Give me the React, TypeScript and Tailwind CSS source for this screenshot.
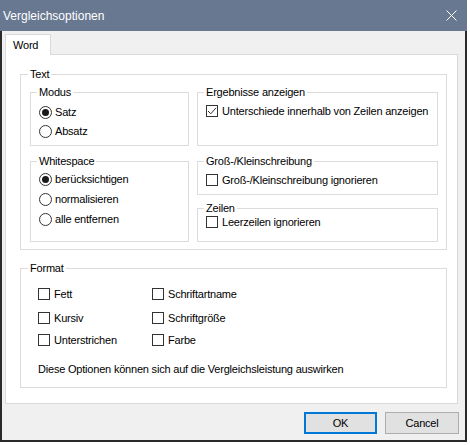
import type { ReactNode } from 'react'

function Group({ label, className, children }: { label: string; className: string; children?: ReactNode }) {
  return (
    <fieldset className={`border border-[#dcdcdc] min-w-0 ${className}`}>
      <legend className="ml-[-2px] px-[2px] leading-[12px]">{label}</legend>
      {children}
    </fieldset>
  )
}

function Radio({ checked, label, h }: { checked?: boolean; label: string; h: string }) {
  return (
    <div className={`flex items-center gap-[3px] ${h}`}>
      <svg width="13" height="13" viewBox="0 0 13 13" className="shrink-0">
        <circle cx="6.5" cy="6.5" r="6" fill="#fff" stroke="#333" strokeWidth="1" />
        {checked && <circle cx="6.5" cy="6.5" r="3.5" fill="#1a1a1a" />}
      </svg>
      <span>{label}</span>
    </div>
  )
}

function Check({ checked, label, h }: { checked?: boolean; label: string; h: string }) {
  return (
    <div className={`flex items-center gap-[4px] ${h}`}>
      <span className="w-[12px] h-[12px] border border-[#333] bg-white shrink-0 flex items-center justify-center">
        {checked && (
          <svg width="10" height="10" viewBox="0 0 10 10">
            <path d="M1 5 L3.8 7.8 L9 1.8" fill="none" stroke="#333" strokeWidth="1" />
          </svg>
        )}
      </span>
      <span>{label}</span>
    </div>
  )
}

export default function App() {
  return (
    <div className="w-[467px] h-[442px] flex flex-col text-[11px] tracking-[-0.2px] text-black font-['Liberation_Sans',Arial,sans-serif]">
      {/* Title bar */}
      <div className="h-[31px] shrink-0 bg-[#687890] flex items-center justify-between pl-[3px] pr-[10px] text-white text-[12px] tracking-normal">
        <span>Vergleichsoptionen</span>
        <svg width="11" height="11" viewBox="0 0 11 11">
          <path d="M0.5 0.5 L10.5 10.5 M10.5 0.5 L0.5 10.5" stroke="#fff" strokeWidth="1" />
        </svg>
      </div>

      {/* Body */}
      <div className="flex-1 bg-[#f0f0f0] border-x-2 border-b-2 border-[#2a2a2a] flex flex-col pl-[3px] pr-[7px] pt-[3px]">
        <div className="flex">
          <div className="relative z-10 -mb-px w-[46px] h-[21px] bg-white border-t border-x border-[#d9d9d9] pl-[7px] pt-[3px] leading-[14px]">
            Word
          </div>
        </div>

        <div className="h-[350px] bg-white border border-[#d9d9d9] pl-[14px] pr-[10px] pt-[13px]">
          <Group label="Text" className="h-[182px] pl-[9px] pr-[8px] pt-[6px]">
            <div className="grid grid-cols-[159px_241px] gap-x-[8px]">
              <div className="flex flex-col">
                <Group label="Modus" className="h-[60px] pl-[8px] pt-[5px]">
                  <Radio checked label="Satz" h="h-[19px]" />
                  <Radio label="Absatz" h="h-[19px]" />
                </Group>
                <Group label="Whitespace" className="h-[87px] mt-[9px] pl-[8px] pt-[2px]">
                  <Radio checked label="berücksichtigen" h="h-[20px]" />
                  <Radio label="normalisieren" h="h-[20px]" />
                  <Radio label="alle entfernen" h="h-[20px]" />
                </Group>
              </div>
              <div className="flex flex-col">
                <Group label="Ergebnisse anzeigen" className="h-[60px] pl-[8px] pt-[3px]">
                  <Check checked label="Unterschiede innerhalb von Zeilen anzeigen" h="h-[20px]" />
                </Group>
                <Group label="Groß-/Kleinschreibung" className="h-[40px] mt-[9px] pl-[8px] pt-[3px]">
                  <Check label="Groß-/Kleinschreibung ignorieren" h="h-[20px]" />
                </Group>
                <Group label="Zeilen" className="h-[40px] mt-[7px] pl-[8px]">
                  <Check label="Leerzeilen ignorieren" h="h-[16px]" />
                </Group>
              </div>
            </div>
          </Group>

          <Group label="Format" className="h-[126px] mt-[12px] pl-[9px] pt-[8px]">
            <div className="ml-[8px] grid grid-cols-[114px_1fr] grid-rows-[24px_24px_20px]">
              <Check label="Fett" h="h-full" />
              <Check label="Schriftartname" h="h-full" />
              <Check label="Kursiv" h="h-full" />
              <Check label="Schriftgröße" h="h-full" />
              <Check label="Unterstrichen" h="h-full" />
              <Check label="Farbe" h="h-full" />
            </div>
            <div className="ml-[8px] mt-[11px] h-[16px] flex items-center">
              Diese Optionen können sich auf die Vergleichsleistung auswirken
            </div>
          </Group>
        </div>

        <div className="flex justify-end gap-[8px] mt-[8px] -mr-px">
          <button className="w-[73px] h-[22px] bg-[#e1e1e1] border-2 border-[#0078d7] leading-none">OK</button>
          <button className="w-[74px] h-[22px] bg-[#e1e1e1] border border-[#adadad] leading-none">Cancel</button>
        </div>
      </div>
    </div>
  )
}
